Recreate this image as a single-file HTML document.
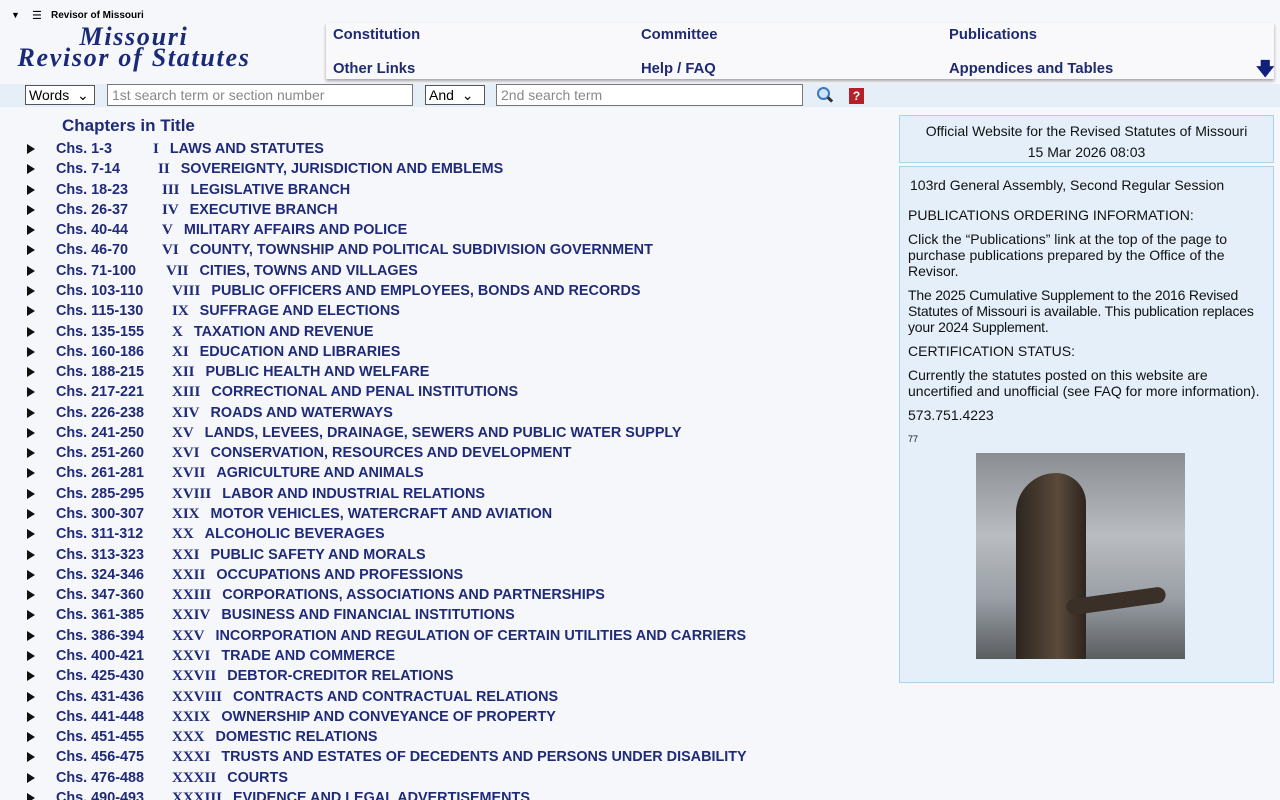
<!DOCTYPE html>
<html><head><meta charset="utf-8"><style>
html,body{margin:0;width:1280px;height:800px;overflow:hidden}
body{background:#f6f7fb;font-family:"Liberation Sans",sans-serif;position:relative}
.a{position:absolute}
.nav{left:326px;top:23px;width:948px;height:56px;background:#f9f9fb;box-shadow:0 2px 3px rgba(0,0,0,.35)}
.nav b{position:absolute;font-size:14.8px;color:#1f2a70}
.sb{left:0;top:84px;width:1280px;height:23px;background:#e6eef8}
.inp{position:absolute;top:84px;border:1px solid #777;background:#fff;font-size:14px;color:#888;line-height:20px;padding-left:4px;box-sizing:border-box;height:22px}
.sel{position:absolute;top:85px;height:20px;border:1px solid #555;background:#fff;font-size:14px;color:#000;line-height:18px;padding-left:3px;box-sizing:border-box}
.row{position:absolute;left:0;height:20px;font-size:14.4px;font-weight:bold;color:#1f2a78;white-space:nowrap}
.row .t{position:absolute;left:27px;top:4px;width:0;height:0;border-left:8px solid #111;border-top:5px solid transparent;border-bottom:5px solid transparent}
.row .c{position:absolute;left:56px;top:0}
.row .n{position:absolute;top:0;font-family:"Liberation Serif",serif;font-size:15px}
.box{left:899px;width:375px;background:#e4eff9;border:1px solid #a9d3ea;font-size:14px;color:#111}
.box p{margin:0 0 8px 0;line-height:16px}
</style></head><body>
<div class="a" style="left:11px;top:10px;font-size:9px">▼</div>
<div class="a" style="left:32px;top:9px;font-size:11px">☰</div>
<div class="a" style="left:51px;top:10px;font-size:10px;font-weight:bold">Revisor of Missouri</div>
<div class="a" style="left:12px;top:26px;width:244px;text-align:center;font-family:'Liberation Serif',serif;font-style:italic;font-weight:bold;color:#1a2a78;font-size:26px;line-height:21px;letter-spacing:1.7px">Missouri<br>Revisor of Statutes</div>
<div class="a nav">
<b style="left:7px;top:4px">Constitution</b><b style="left:315px;top:4px">Committee</b><b style="left:623px;top:4px">Publications</b>
<b style="left:7px;top:38px">Other Links</b><b style="left:315px;top:38px">Help / FAQ</b><b style="left:623px;top:38px">Appendices and Tables</b>
<b style="left:930px;top:34px;font-size:18px;color:#11207a">🡇</b>
</div>
<div class="a sb"></div>
<div class="sel" style="left:25px;width:70px">Words &nbsp;⌄</div>
<div class="inp" style="left:107px;width:306px">1st search term or section number</div>
<div class="sel" style="left:425px;width:60px">And &nbsp;⌄</div>
<div class="inp" style="left:496px;width:307px">2nd search term</div>
<div class="a" style="left:817px;top:87px;width:9px;height:9px;border:2px solid #3a78c0;border-radius:50%;background:#cfe4f7"></div>
<div class="a" style="left:827px;top:98px;width:6px;height:3px;background:#333;transform:rotate(45deg)"></div>
<div class="a" style="left:849px;top:88px;width:15px;height:16px;background:#b5202a;color:#fff;font-size:12px;font-weight:bold;text-align:center;line-height:16px">?</div>
<div class="a" style="left:62px;top:116px;font-size:17px;font-weight:bold;color:#1f2a78">Chapters in Title</div>
<div id="rows"></div>
<div class="a box" style="top:115px;height:48px;text-align:center;line-height:21px;padding-top:5px;box-sizing:border-box">Official Website for the Revised Statutes of Missouri<br>15 Mar 2026 08:03</div>
<div class="a box" style="top:166px;height:517px;box-sizing:border-box;padding:10px 8px">
<p style="padding-left:2px">103rd General Assembly, Second Regular Session</p>
<p style="margin-top:14px">PUBLICATIONS ORDERING INFORMATION:</p>
<p>Click the “Publications” link at the top of the page to purchase publications prepared by the Office of the Revisor.</p>
<p style="letter-spacing:-0.2px">The 2025 Cumulative Supplement to the 2016 Revised Statutes of Missouri is available. This publication replaces your 2024 Supplement.</p>
<p>CERTIFICATION STATUS:</p>
<p>Currently the statutes posted on this website are uncertified and unofficial (see FAQ for more information).</p>
<p>573.751.4223</p>
<p style="font-size:9px">77</p>
</div>
<div class="a" style="left:976px;top:453px;width:209px;height:206px;overflow:hidden;background:linear-gradient(180deg,#8a8d92 0%,#b9bcc0 40%,#9aa0a6 70%,#5a5d60 100%)">
<div class="a" style="left:40px;top:20px;width:70px;height:186px;background:linear-gradient(90deg,#2c2620,#5b4a3a 60%,#2c241e);border-radius:40px 30px 0 0"></div>
<div class="a" style="left:90px;top:140px;width:100px;height:16px;background:#3a3028;transform:rotate(-8deg);border-radius:8px"></div>
</div>
<script>
const d=[["1-3","I","LAWS AND STATUTES",153],["7-14","II","SOVEREIGNTY, JURISDICTION AND EMBLEMS",158],["18-23","III","LEGISLATIVE BRANCH",162],["26-37","IV","EXECUTIVE BRANCH",162],["40-44","V","MILITARY AFFAIRS AND POLICE",162],["46-70","VI","COUNTY, TOWNSHIP AND POLITICAL SUBDIVISION GOVERNMENT",162],["71-100","VII","CITIES, TOWNS AND VILLAGES",166],["103-110","VIII","PUBLIC OFFICERS AND EMPLOYEES, BONDS AND RECORDS",172],["115-130","IX","SUFFRAGE AND ELECTIONS",172],["135-155","X","TAXATION AND REVENUE",172],["160-186","XI","EDUCATION AND LIBRARIES",172],["188-215","XII","PUBLIC HEALTH AND WELFARE",172],["217-221","XIII","CORRECTIONAL AND PENAL INSTITUTIONS",172],["226-238","XIV","ROADS AND WATERWAYS",172],["241-250","XV","LANDS, LEVEES, DRAINAGE, SEWERS AND PUBLIC WATER SUPPLY",172],["251-260","XVI","CONSERVATION, RESOURCES AND DEVELOPMENT",172],["261-281","XVII","AGRICULTURE AND ANIMALS",172],["285-295","XVIII","LABOR AND INDUSTRIAL RELATIONS",172],["300-307","XIX","MOTOR VEHICLES, WATERCRAFT AND AVIATION",172],["311-312","XX","ALCOHOLIC BEVERAGES",172],["313-323","XXI","PUBLIC SAFETY AND MORALS",172],["324-346","XXII","OCCUPATIONS AND PROFESSIONS",172],["347-360","XXIII","CORPORATIONS, ASSOCIATIONS AND PARTNERSHIPS",172],["361-385","XXIV","BUSINESS AND FINANCIAL INSTITUTIONS",172],["386-394","XXV","INCORPORATION AND REGULATION OF CERTAIN UTILITIES AND CARRIERS",172],["400-421","XXVI","TRADE AND COMMERCE",172],["425-430","XXVII","DEBTOR-CREDITOR RELATIONS",172],["431-436","XXVIII","CONTRACTS AND CONTRACTUAL RELATIONS",172],["441-448","XXIX","OWNERSHIP AND CONVEYANCE OF PROPERTY",172],["451-455","XXX","DOMESTIC RELATIONS",172],["456-475","XXXI","TRUSTS AND ESTATES OF DECEDENTS AND PERSONS UNDER DISABILITY",172],["476-488","XXXII","COURTS",172],["490-493","XXXIII","EVIDENCE AND LEGAL ADVERTISEMENTS",172]];
let h="";d.forEach((r,i)=>{h+=`<div class="row" style="top:${141+i*20.28}px"><span class="t" style="top:3px"></span><span class="c">Chs. ${r[0]}</span><span class="n" style="left:${r[3]}px">${r[1]}<span style="font-family:'Liberation Sans',sans-serif;font-size:14.4px;margin-left:11px">${r[2]}</span></span></div>`});
document.getElementById("rows").innerHTML=h;
</script>
</body></html>
